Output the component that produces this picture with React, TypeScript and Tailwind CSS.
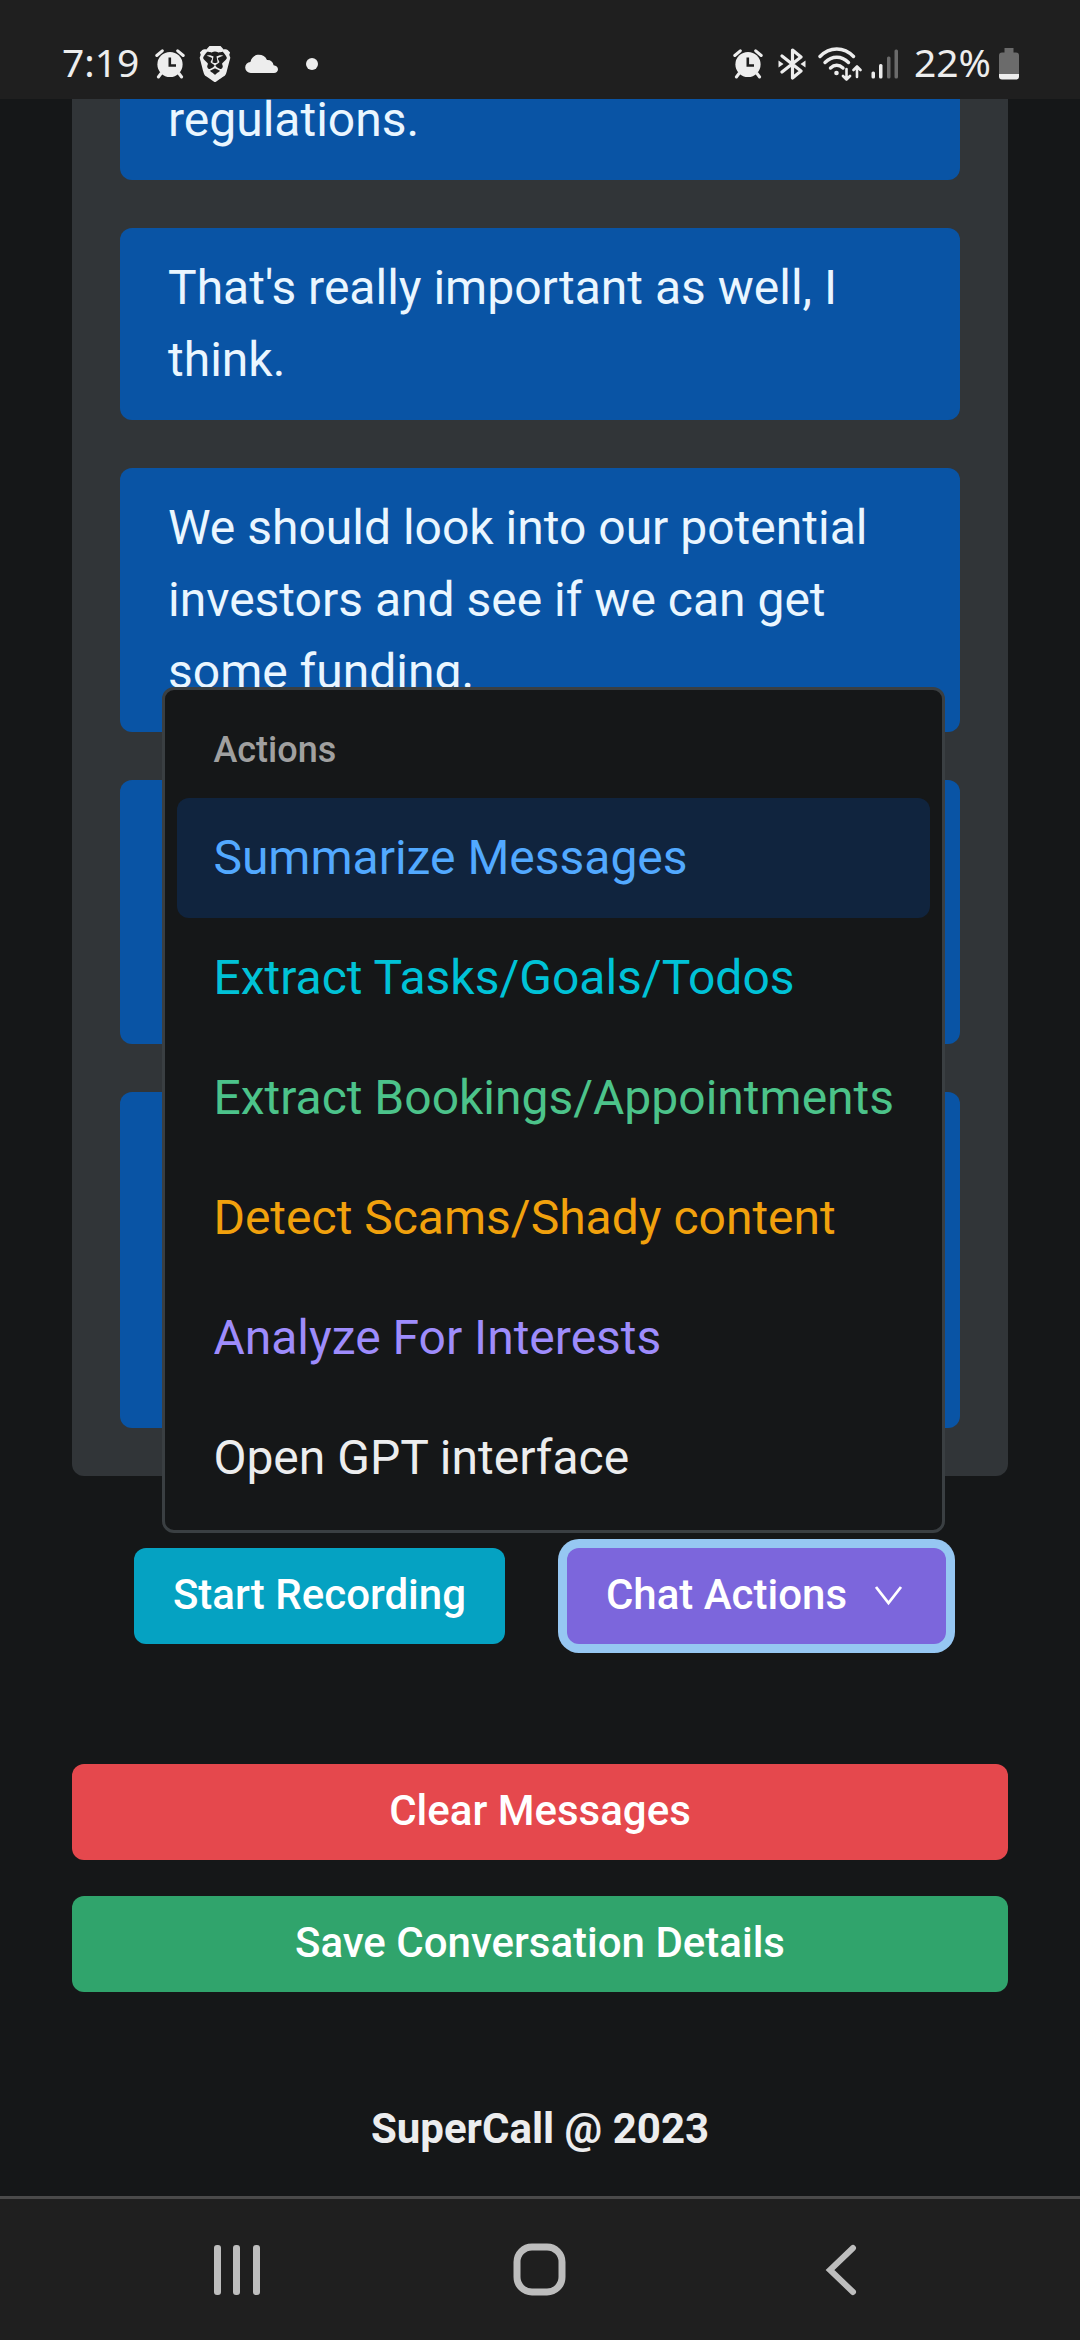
import { SiBrave } from "react-icons/si";

const messages = [
  { text: "regulations.", height: "min-h-[120px]" },
  { text: "That's really important as well, I think.", height: "min-h-[192px]" },
  {
    text: "We should look into our potential investors and see if we can get some funding.",
    height: "min-h-[264px]",
  },
  { text: "", height: "min-h-[264px]" },
  { text: "", height: "min-h-[336px]" },
];

const actions = [
  { label: "Summarize Messages", style: "bg-[#10243e] text-[#52a9ff]" },
  { label: "Extract Tasks/Goals/Todos", style: "text-[#00c2d7]" },
  { label: "Extract Bookings/Appointments", style: "text-[#4cc38a]" },
  { label: "Detect Scams/Shady content", style: "text-[#f1a10d]" },
  { label: "Analyze For Interests", style: "text-[#9e8cfc]" },
  { label: "Open GPT interface", style: "text-[#ecedee]" },
];

function AlarmIcon() {
  return (
    <svg width="30" height="30" viewBox="0 0 30 30" fill="none" aria-hidden="true">
      <circle cx="15" cy="15.5" r="12.6" fill="#ededed" />
      <path d="M1.8 6.5 7.3 1.8M28.2 6.5 22.7 1.8" stroke="#ededed" strokeWidth="3" strokeLinecap="round" />
      <path d="M6 24.5 3.4 28M24 24.5l2.6 3.5" stroke="#ededed" strokeWidth="3" strokeLinecap="round" />
      <path d="M14.8 8.5v8h6.2" stroke="#1f1f1f" strokeWidth="2.6" />
    </svg>
  );
}

function CloudIcon() {
  return (
    <svg width="34" height="20" viewBox="0 0 34 20" fill="#ededed" aria-hidden="true">
      <path d="M6 19a5.5 5.5 0 0 1-.6-11C6.5 3.4 9.7.8 13.8.8c3.7 0 6.6 1.700 8.200 5.100 3.700-.200 6 1.800 6.600 5.300 2.500.300 4.400 1.700 4.400 4.100 0 2.300-1.800 3.700-4 3.700Z" />
    </svg>
  );
}

function BluetoothIcon() {
  return (
    <svg width="28" height="32" viewBox="0 0 28 32" fill="none" aria-hidden="true">
      <path
        d="M4 8 23 23l-8.500 7V2L23 9 4 24"
        stroke="#ededed"
        strokeWidth="3.200"
        strokeLinecap="round"
        strokeLinejoin="round"
      />
      <path d="M.5 12.500 5.500 16 .5 19.500ZM27.500 12.500 22.500 16l5 3.500Z" fill="#ededed" />
    </svg>
  );
}

function WifiIcon() {
  return (
    <svg width="44" height="34" viewBox="0 0 44 34" fill="none" aria-hidden="true">
      <g stroke="#ededed" strokeWidth="3.400" strokeLinecap="round">
        <path d="M2 9.500C11.500-.600 26-.600 35.500 9.500" />
        <path d="M7 15.500c7-7 16.500-7 23.500 0" />
        <path d="M12.500 21c3.900-3.600 8.600-3.600 12.500 0" />
      </g>
      <circle cx="18.500" cy="26" r="2.300" fill="#ededed" />
      <g stroke="#ededed" strokeWidth="2.600" strokeLinecap="round" strokeLinejoin="round">
        <path d="M28.500 22v10.500M25 29l3.500 3.500L32 29" />
        <path d="M39 30V19.500M35.500 23l3.500-3.500 3.500 3.500" />
      </g>
    </svg>
  );
}

function SignalIcon() {
  return (
    <svg width="28" height="30" viewBox="0 0 28 30" aria-hidden="true">
      <rect x="0.500" y="22.500" width="3.500" height="7" rx="1.500" fill="#ededed" />
      <rect x="8" y="15" width="3.500" height="14.500" rx="1.500" fill="#ededed" />
      <rect x="16" y="7.500" width="3.500" height="22" rx="1.500" fill="#6b6b6b" />
      <rect x="23.500" y="0.500" width="3.500" height="29" rx="1.500" fill="#6b6b6b" />
    </svg>
  );
}

function BatteryIcon() {
  return (
    <svg width="20" height="32" viewBox="0 0 20 32" aria-hidden="true">
      <path d="M5.500 0h9v4.500H17a3 3 0 0 1 3 3V26H0V7.500a3 3 0 0 1 3-3h2.500Z" fill="#6b6b6b" />
      <path d="M0 26h20v2.500a3 3 0 0 1-3 3H3a3 3 0 0 1-3-3Z" fill="#ededed" />
    </svg>
  );
}

function StatusBar() {
  return (
    <header className="flex h-[99px] shrink-0 items-center justify-between bg-[#1f1f1f] pt-7 pr-[61px] pl-[62px] font-['Noto_Sans',sans-serif] text-[39px] leading-[40px] text-[#ededed]">
      <div className="flex items-center">
        <time className="mr-4 pb-[3px]">7:19</time>
        <AlarmIcon />
        <SiBrave className="ml-3 h-9 w-9 text-[#ededed]" aria-hidden="true" />
        <span className="ml-3">
          <CloudIcon />
        </span>
        <span className="ml-[27px] h-3 w-3 rounded-full bg-[#ededed]" />
      </div>
      <div className="flex items-center">
        <AlarmIcon />
        <span className="ml-[15px]">
          <BluetoothIcon />
        </span>
        <span className="ml-3">
          <WifiIcon />
        </span>
        <span className="ml-[9px]">
          <SignalIcon />
        </span>
        <span className="mr-2 ml-[15px] pb-[3px]">22%</span>
        <BatteryIcon />
      </div>
    </header>
  );
}

function ActionsMenu() {
  return (
    <div
      role="menu"
      aria-label="Actions"
      className="absolute right-px bottom-full z-10 mb-[15px] flex w-max flex-col rounded-xl border-[3px] border-[#3a3f42] bg-[#151718] p-3"
    >
      <div className="flex h-24 items-center px-9 text-4xl font-medium text-[#a0a0a0]">Actions</div>
      {actions.map((action) => (
        <button
          key={action.label}
          type="button"
          role="menuitem"
          className={`h-[120px] rounded-xl px-9 text-left text-5xl font-normal ${action.style}`}
        >
          {action.label}
        </button>
      ))}
    </div>
  );
}

export default function App() {
  return (
    <div className="flex h-screen flex-col bg-[#151718] font-[Roboto,sans-serif]">
      <StatusBar />
      <main className="flex min-h-0 flex-1 flex-col justify-end overflow-hidden px-[72px]">
        <section className="flex shrink-0 flex-col gap-12 rounded-xl bg-[#313538] p-12">
          {messages.map((message, index) => (
            <p
              key={index}
              className={`rounded-xl bg-[#0954a5] px-12 py-6 text-5xl leading-[72px] text-[#eaf6ff] ${message.height}`}
            >
              {message.text}
            </p>
          ))}
        </section>
        <div className="mt-[72px] flex shrink-0 justify-evenly text-[42px] font-medium text-white">
          <button type="button" className="h-24 rounded-xl bg-[#05a2c2] px-[39px] pb-1">
            Start Recording
          </button>
          <div className="relative">
            <button
              type="button"
              aria-haspopup="menu"
              aria-expanded="true"
              className="flex h-24 items-center gap-[19px] rounded-xl bg-[#7c66dc] pr-[35px] pb-1 pl-[39px] ring-[9px] ring-[#96c7f2]"
            >
              Chat Actions
              <svg width="45" height="45" viewBox="0 0 45 45" fill="none" aria-hidden="true">
                <path d="M10 15l12.500 16L35 15" stroke="white" strokeWidth="2.800" />
              </svg>
            </button>
            <ActionsMenu />
          </div>
        </div>
        <div className="mt-[120px] flex shrink-0 flex-col gap-9 text-[42px] font-medium text-white">
          <button type="button" className="h-24 rounded-xl bg-[#e5484d] pb-1">
            Clear Messages
          </button>
          <button type="button" className="h-24 rounded-xl bg-[#30a46c] pb-1">
            Save Conversation Details
          </button>
        </div>
        <footer className="mt-[113px] mb-[43px] shrink-0 text-center text-[42px] leading-[48px] font-bold text-[#ecedee]">
          SuperCall @ 2023
        </footer>
      </main>
      <nav
        aria-label="System"
        className="flex h-36 shrink-0 items-center justify-between border-t-[3px] border-[#4a4a4a] bg-[#1f1f1f] px-[208px]"
      >
        <button type="button" aria-label="Recent apps">
          <svg width="58" height="58" viewBox="0 0 58 58" fill="#bdbdbd" aria-hidden="true">
            <rect x="6" y="4" width="7" height="50" rx="3" />
            <rect x="25" y="4" width="7" height="50" rx="3" />
            <rect x="45" y="4" width="7" height="50" rx="3" />
          </svg>
        </button>
        <button type="button" aria-label="Home">
          <svg width="58" height="58" viewBox="0 0 58 58" fill="none" aria-hidden="true">
            <rect x="6" y="6" width="45" height="45" rx="15" stroke="#bdbdbd" strokeWidth="7" />
          </svg>
        </button>
        <button type="button" aria-label="Back">
          <svg width="58" height="58" viewBox="0 0 58 58" fill="none" aria-hidden="true">
            <path d="M39 7 16 29l23 22" stroke="#bdbdbd" strokeWidth="6" strokeLinecap="round" />
          </svg>
        </button>
      </nav>
    </div>
  );
}
